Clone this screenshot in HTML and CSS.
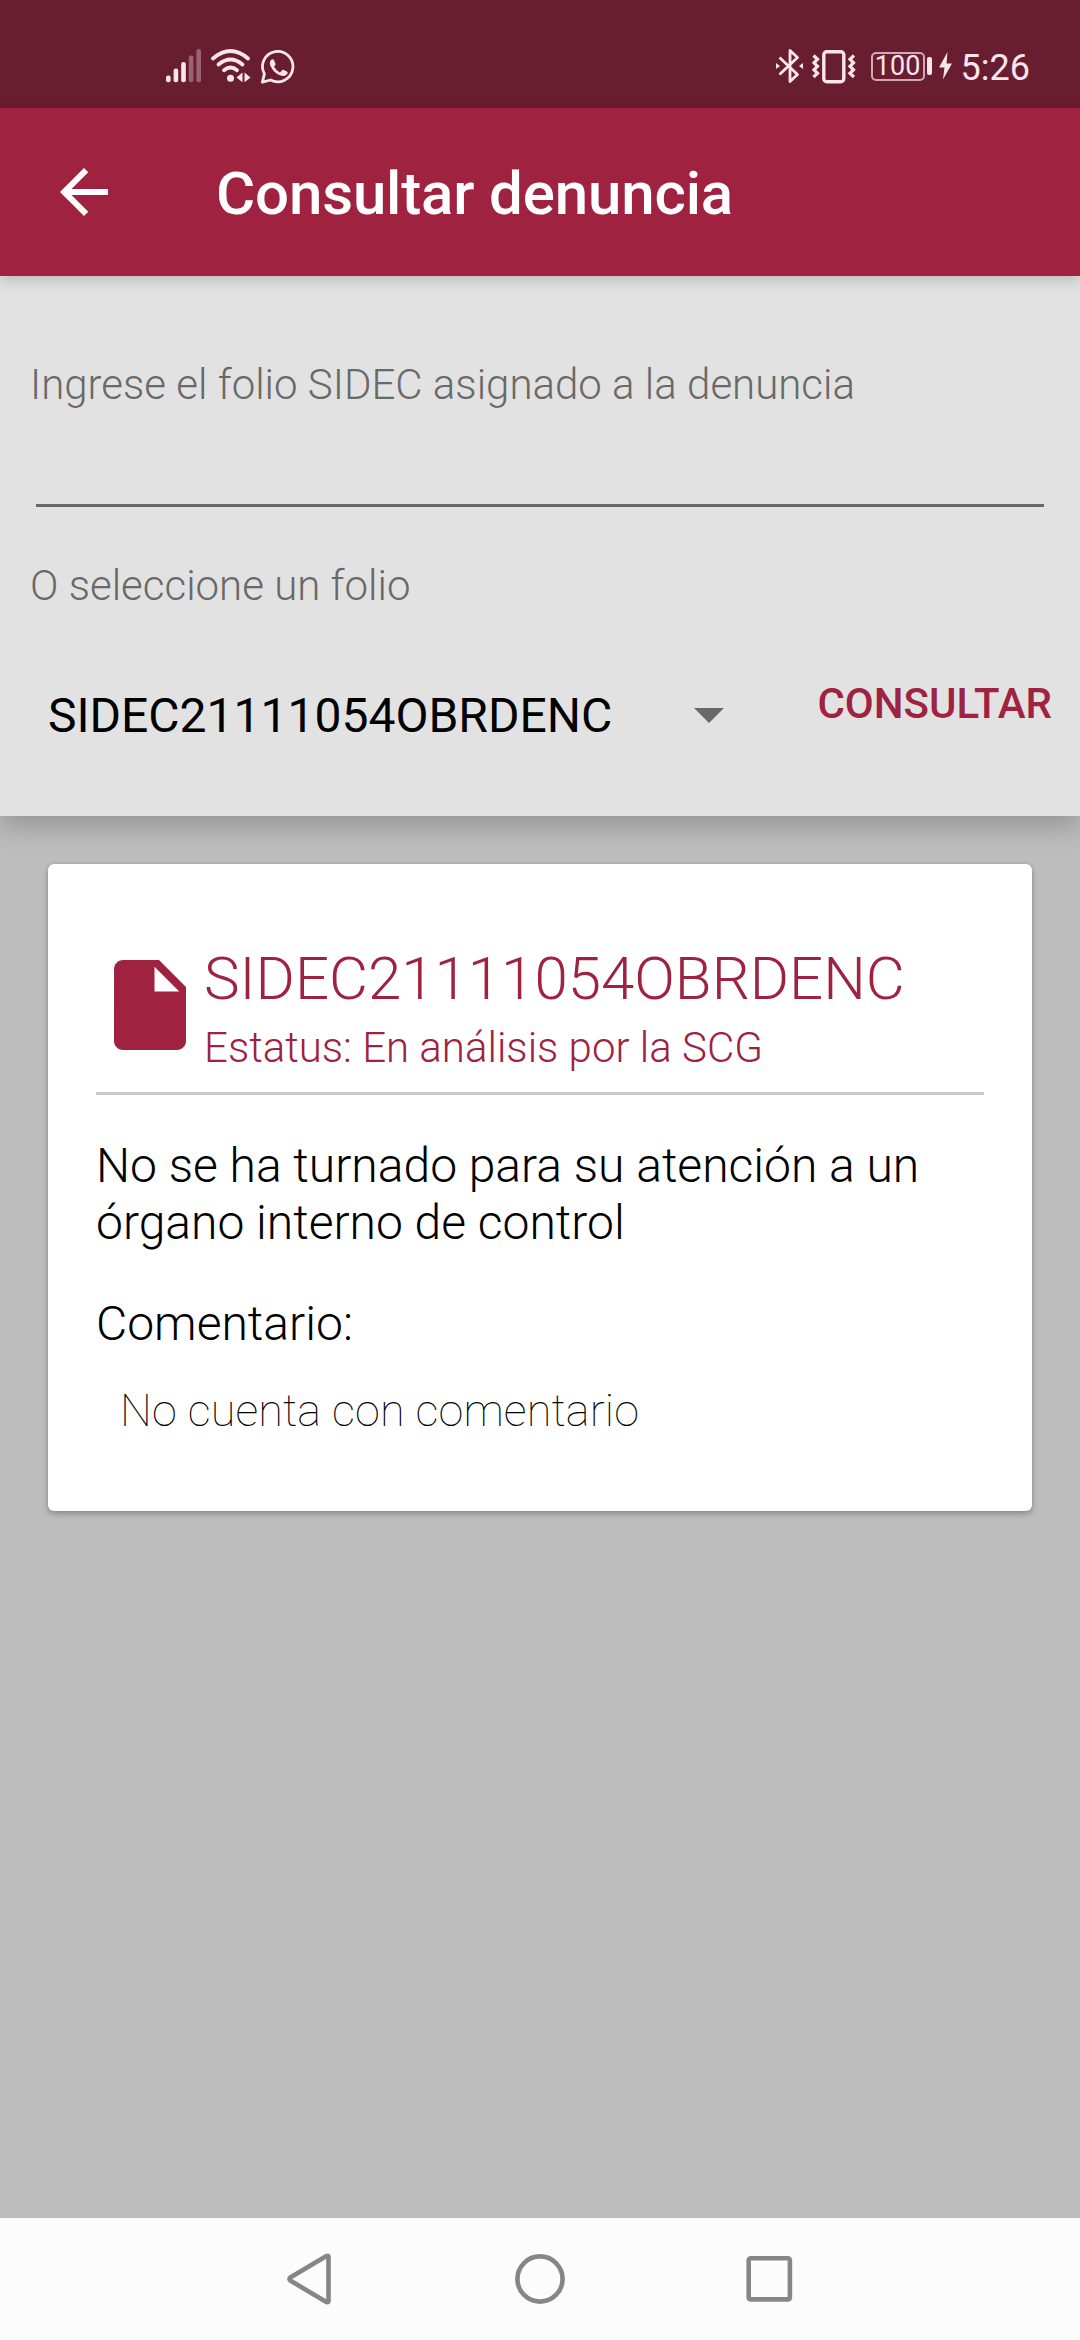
FILE: index.html
```html
<!DOCTYPE html>
<html lang="es">
<head>
<meta charset="utf-8">
<title>Consultar denuncia</title>
<link rel="stylesheet" href="styles.css">
</head>
<body>
<div class="screen">
  <div class="status-bar">
    <div class="status-left">
      <svg width="36" height="36" viewBox="0 0 36 36" fill="currentColor">
        <rect x="0" y="27.500" width="4.600" height="6.800" rx="2"/>
        <rect x="7.600" y="20.500" width="4.600" height="13.800" rx="2"/>
        <rect x="15.200" y="14" width="4.600" height="20.300" rx="2"/>
        <rect x="22.800" y="7.500" width="4.600" height="26.800" rx="2" opacity=".35"/>
        <rect x="30.400" y="1" width="4.600" height="33.300" rx="2" opacity=".35"/>
      </svg>
      <svg width="40" height="36" viewBox="0 0 40 36" fill="none" stroke="currentColor" stroke-width="3.800" stroke-linecap="round">
        <path d="M2 10.500Q19.500 -4.500 37 10.500"/>
        <path d="M7.500 16.500Q19.500 6.500 31.500 16.500"/>
        <path d="M13 22.300Q19.500 16.800 26 22.300"/>
        <circle cx="19.500" cy="30.200" r="3.500" fill="currentColor" stroke="none"/>
        <path d="M31.500 24.500v9.800l-6-4.900zM33.500 24.500l6 4.900-6 4.900z" fill="currentColor" stroke="none"/>
      </svg>
      <svg width="36" height="36" viewBox="0 0 36 36" fill="none" stroke="currentColor" stroke-width="2.800">
        <path d="M2.400 34.200l2-8.300A15.200 15.200 0 1 1 10.600 32z" stroke-linejoin="round"/>
        <path d="M10.700 12.500c1-1.500 2.600-1.600 3.300-.3l1.500 3.500c.2.800-.2 1.500-1.500 2.900 1.500 2.700 3.200 4.400 6 5.800l2.200-2.200c.6-.5 1-.5 1.700-.2l3 1.500c1 .5 1 1.500.3 2.600-1.400 2.200-4.500 2.400-7.300 1.200-4.500-1.900-7-4.500-9-8.500-1.300-2.500-1.400-4.700-.2-6.300z" fill="currentColor" stroke="none"/>
      </svg>
    </div>
    <div class="status-right">
      <svg width="28" height="36" viewBox="0 0 28 36" fill="none" stroke="currentColor" stroke-width="2.800">
        <path d="M3.500 9.500L21.500 26.500L14 33.500V2.500L21.500 9.500L3.500 26.500" stroke-linejoin="round"/>
        <path d="M0 15v6l4-3zM27 15v6l-4-3z" fill="currentColor" stroke="none"/>
      </svg>
      <svg width="44" height="36" viewBox="0 0 44 36" fill="none" stroke="currentColor" stroke-width="3.400">
        <rect x="11.800" y="3.700" width="20" height="30" rx="3"/>
        <path d="M1.500 7.500l4 3.800-3.500 3.500 3.500 3.500-3.500 3.500 3.500 3.500-4 3.700M42 7.500l-4 3.800 3.500 3.500-3.500 3.500 3.500 3.500-3.500 3.500 4 3.700" stroke-width="3.200"/>
      </svg>
      <div class="battery"><span class="battery-level">100</span></div>
      <div class="battery-cap"></div>
      <svg class="bolt" width="13" height="28" viewBox="0 0 13 28" fill="currentColor"><path d="M8.500 0L0 15.500h5.500L4 27.500l9-16H7.500z"/></svg>
      <span class="clock">5:26</span>
    </div>
  </div>

  <header class="app-bar">
    <svg class="back" width="72" height="72" viewBox="0 0 24 24" fill="currentColor"><path d="M20 11H7.830l5.590-5.590L12 4l-8 8 8 8 1.410-1.410L7.830 13H20v-2z"/></svg>
    <h1 class="title">Consultar denuncia</h1>
  </header>

  <section class="form">
    <label class="label" for="folio">Ingrese el folio SIDEC asignado a la denuncia</label>
    <input class="field" id="folio" type="text">
    <div class="label label-select">O seleccione un folio</div>
    <div class="form-row">
      <div class="spinner">
        <span class="spinner-value">SIDEC21111054OBRDENC</span>
        <svg class="caret" width="30" height="15" viewBox="0 0 30 15"><path d="M0 0h30L15 15z" fill="#696969"/></svg>
      </div>
      <button class="submit" type="button">CONSULTAR</button>
    </div>
  </section>

  <main class="content">
    <article class="card">
      <div class="card-head">
        <svg class="doc" width="108" height="108" viewBox="0 0 24 24" fill="currentColor"><path d="M6 2c-1.100 0-1.990.900-1.990 2L4 20c0 1.100.890 2 1.990 2H18c1.100 0 2-.900 2-2V8l-6-6H6zm7 7V3.500L18.500 9H13z"/></svg>
        <div class="card-titles">
          <h2 class="folio">SIDEC21111054OBRDENC</h2>
          <p class="estatus">Estatus: En análisis por la SCG</p>
        </div>
      </div>
      <p class="detail">No se ha turnado para su atención a un órgano interno de control</p>
      <p class="comment-label">Comentario:</p>
      <p class="comment">No cuenta con comentario</p>
    </article>
  </main>

  <nav class="nav-bar">
    <svg width="54" height="54" viewBox="0 0 54 54"><path d="M44.500 4.700V49.300Q44 51 42 49.800L6.300 28.600Q4.500 27 6.300 25.400L42 4.200Q44 3 44.500 4.700z"/></svg>
    <svg width="54" height="54" viewBox="0 0 54 54"><circle cx="27" cy="27" r="22.600"/></svg>
    <svg width="54" height="54" viewBox="0 0 54 54"><rect x="6.700" y="6.200" width="41.200" height="41.200" rx="2"/></svg>
  </nav>
</div>
</body>
</html>
```
FILE: styles.css
```css
* { box-sizing: border-box; }
body {
  margin: 0;
  font-family: Roboto, "Liberation Sans", sans-serif;
  color: #000;
}
h1, h2, p { margin: 0; }
svg { display: block; flex: none; }

.screen {
  width: 1080px;
  height: 2340px;
  display: flex;
  flex-direction: column;
  background: #bdbdbd;
  overflow: hidden;
}

.status-bar {
  flex: none;
  height: 108px;
  padding: 48px 50px 0 166px;
  display: flex;
  justify-content: space-between;
  align-items: flex-start;
  background: #691d31;
  color: #f8e6eb;
}
.status-left { display: flex; gap: 9px; }
.status-right { display: flex; height: 36px; align-items: center; }
.status-right svg + svg { margin-left: 8px; }
.battery {
  width: 54px;
  height: 29px;
  margin-left: 15px;
  border: 2px solid #d0a9b4;
  border-radius: 5px;
  display: flex;
  align-items: center;
  justify-content: center;
}
.battery-level { font-size: 27px; line-height: 25px; }
.battery-cap {
  width: 5px;
  height: 18px;
  margin-left: 2px;
  border-radius: 2px;
  background: currentColor;
}
.bolt { margin-left: 7px; }
.clock { margin-left: 9px; font-size: 36px; line-height: 36px; padding-top: 3px; }

.app-bar {
  flex: none;
  height: 168px;
  padding: 0 48px;
  display: flex;
  align-items: center;
  gap: 96px;
  background: #9f2241;
  color: #fff;
  box-shadow: 0 4px 14px rgba(0, 0, 0, .18);
  z-index: 2;
}
.title { font-size: 60px; font-weight: 500; line-height: 70px; padding-top: 4px; letter-spacing: -.15px; }

.form {
  flex: none;
  height: 540px;
  padding: 84px 28px 0 30px;
  display: flex;
  flex-direction: column;
  background: #e2e2e2;
  box-shadow: 0 10px 26px rgba(0, 0, 0, .22);
  z-index: 1;
}
.label { font-size: 42px; font-weight: 300; line-height: 50px; color: #696969; }
.field {
  height: 97px;
  margin: 0 8px 0 6px;
  padding: 0;
  border: 0;
  border-bottom: 3px solid #696969;
  background: transparent;
  font: 300 48px Roboto, sans-serif;
  outline: none;
}
.label-select { margin-top: 54px; }
.form-row {
  display: flex;
  justify-content: space-between;
  align-items: flex-start;
  padding-top: 68px;
}
.spinner { display: flex; width: 694px; justify-content: space-between; padding-left: 18px; padding-top: 9px; }
.spinner-value { font-size: 48px; line-height: 56px; }
.caret { margin-top: 20px; }
.submit {
  padding: 0;
  border: 0;
  background: none;
  color: #9f2241;
  font: 500 42px/50px Roboto, sans-serif;
}

.content { flex: 1; padding: 48px; }
.card {
  height: 647px;
  padding: 32px 48px 0;
  border-radius: 6px;
  background: #fff;
  box-shadow: 0 3px 6px rgba(0, 0, 0, .26), 0 0 3px rgba(0, 0, 0, .12);
}
.card-head {
  height: 199px;
  display: flex;
  color: #9f2241;
  border-bottom: 3px solid #c8c8c8;
}
.doc { margin-top: 55px; }
.card-titles { padding-top: 48px; }
.folio { font-size: 60px; font-weight: 300; line-height: 70px; }
.estatus { margin-top: 9px; font-size: 42px; font-weight: 300; line-height: 50px; }
.detail { margin-top: 42px; font-size: 48px; font-weight: 300; line-height: 57px; }
.comment-label { margin-top: 44px; font-size: 48px; font-weight: 300; line-height: 57px; }
.comment { margin: 32px 0 0 24px; font-size: 45px; font-weight: 100; line-height: 54px; letter-spacing: .12px; }

.nav-bar {
  flex: none;
  height: 122px;
  padding: 0 284px;
  display: flex;
  align-items: center;
  justify-content: space-between;
  background: #fcfcfc;
}
.nav-bar svg { fill: none; stroke: #868686; stroke-width: 4.6; stroke-linejoin: round; }
```
